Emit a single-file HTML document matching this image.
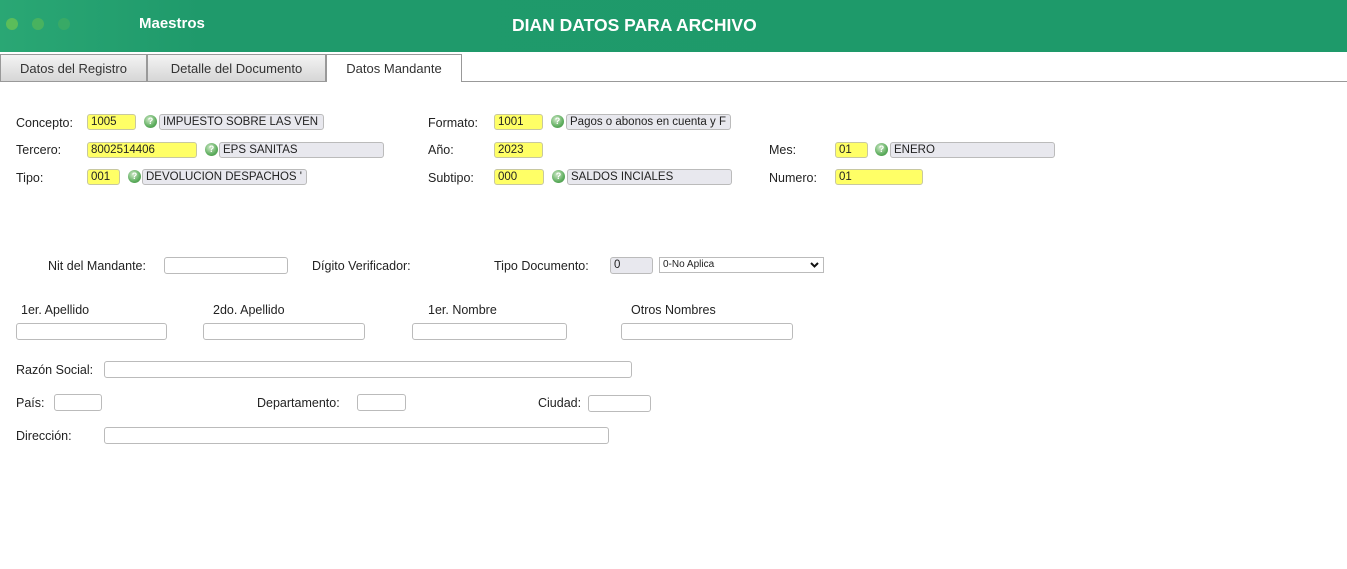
<!DOCTYPE html>
<html><head><meta charset="utf-8"><style>
*{box-sizing:border-box;margin:0;padding:0}
body{width:1347px;height:569px;background:#fff;position:relative;overflow:hidden;font-family:"Liberation Sans",sans-serif;font-size:12px;color:#222}
.a{position:absolute}
.hdr{left:0;top:0;width:1347px;height:52px;background:linear-gradient(90deg,#2aa774 0,#1f9a6b 200px,#1e9a6a)}
.dot{width:12px;height:12px;border-radius:50%;top:18px}
.tab{top:54px;height:28px;border:1px solid #999;background:linear-gradient(#f4f4f4,#d6d6d6);font-size:13px;color:#333;text-align:center;line-height:27px}
.lb{font-size:12.5px;color:#222;line-height:16px}
.y{background:#ffff66;border:1px solid #c8c8a0;border-radius:3px;height:16px;font-size:11.5px;line-height:14px;padding-left:3px}
.d{background:#e8e8ee;border:1px solid #bbb;border-radius:3px;height:16px;font-size:11.5px;line-height:14px;padding-left:3px;white-space:nowrap;overflow:hidden}
.w{background:#fff;border:1px solid #bbb;border-radius:3px;height:17px}
.ic{width:13px;height:13px;border-radius:50%;background:radial-gradient(circle at 40% 35%,#cfe9c8,#5fae5f 60%,#3d8a3d);color:#fff;font-size:9px;font-weight:bold;text-align:center;line-height:13px}
</style></head><body>
<div class="a hdr"></div>
<div class="a dot" style="left:6px;background:#5bbd5a"></div>
<div class="a dot" style="left:32px;background:#48b25f"></div>
<div class="a dot" style="left:58px;background:#38aa66"></div>
<div class="a" style="left:139px;top:15px;color:#fff;font-weight:bold;font-size:15px">Maestros</div>
<div class="a" style="left:512px;top:15px;color:#fff;font-weight:bold;font-size:17.5px">DIAN DATOS PARA ARCHIVO</div>
<div class="a tab" style="left:0;width:147px">Datos del Registro</div>
<div class="a tab" style="left:147px;width:179px">Detalle del Documento</div>
<div class="a tab" style="left:326px;width:136px;background:#fff;border-bottom:none;height:28px">Datos Mandante</div>
<div class="a" style="left:0;top:81px;width:326px;height:1px;background:#999"></div>
<div class="a" style="left:461px;top:81px;width:886px;height:1px;background:#999"></div>

<div class="a lb" style="left:16px;top:115px">Concepto:</div>
<div class="a y" style="left:87px;top:114px;width:49px">1005</div>
<div class="a ic" style="left:144px;top:115px">?</div>
<div class="a d" style="left:159px;top:114px;width:165px">IMPUESTO SOBRE LAS VEN</div>
<div class="a lb" style="left:16px;top:142px">Tercero:</div>
<div class="a y" style="left:87px;top:142px;width:110px">8002514406</div>
<div class="a ic" style="left:205px;top:143px">?</div>
<div class="a d" style="left:219px;top:142px;width:165px">EPS SANITAS</div>
<div class="a lb" style="left:16px;top:170px">Tipo:</div>
<div class="a y" style="left:87px;top:169px;width:33px">001</div>
<div class="a ic" style="left:128px;top:170px">?</div>
<div class="a d" style="left:142px;top:169px;width:165px">DEVOLUCION DESPACHOS '</div>

<div class="a lb" style="left:428px;top:115px">Formato:</div>
<div class="a y" style="left:494px;top:114px;width:49px">1001</div>
<div class="a ic" style="left:551px;top:115px">?</div>
<div class="a d" style="left:566px;top:114px;width:165px">Pagos o abonos en cuenta y F</div>
<div class="a lb" style="left:428px;top:142px">Año:</div>
<div class="a y" style="left:494px;top:142px;width:49px">2023</div>
<div class="a lb" style="left:428px;top:170px">Subtipo:</div>
<div class="a y" style="left:494px;top:169px;width:50px">000</div>
<div class="a ic" style="left:552px;top:170px">?</div>
<div class="a d" style="left:567px;top:169px;width:165px">SALDOS INCIALES</div>

<div class="a lb" style="left:769px;top:142px">Mes:</div>
<div class="a y" style="left:835px;top:142px;width:33px">01</div>
<div class="a ic" style="left:875px;top:143px">?</div>
<div class="a d" style="left:890px;top:142px;width:165px">ENERO</div>
<div class="a lb" style="left:769px;top:170px">Numero:</div>
<div class="a y" style="left:835px;top:169px;width:88px">01</div>

<div class="a lb" style="left:48px;top:258px">Nit del Mandante:</div>
<div class="a w" style="left:164px;top:257px;width:124px"></div>
<div class="a lb" style="left:312px;top:258px">Dígito Verificador:</div>
<div class="a lb" style="left:494px;top:258px">Tipo Documento:</div>
<div class="a d" style="left:610px;top:257px;width:43px;height:17px">0</div>
<div class="a" style="left:659px;top:257px;width:165px;height:16px;border:1px solid #bbb;font-size:10px;line-height:14px;padding-left:3px">0-No Aplica<svg style="position:absolute;right:4px;top:4px" width="9" height="6" viewBox="0 0 9 6"><path d="M1 1l3.5 3.5L8 1" stroke="#111" stroke-width="2" fill="none"/></svg></div>

<div class="a lb" style="left:21px;top:302px">1er. Apellido</div>
<div class="a lb" style="left:213px;top:302px">2do. Apellido</div>
<div class="a lb" style="left:428px;top:302px">1er. Nombre</div>
<div class="a lb" style="left:631px;top:302px">Otros Nombres</div>
<div class="a w" style="left:16px;top:323px;width:151px"></div>
<div class="a w" style="left:203px;top:323px;width:162px"></div>
<div class="a w" style="left:412px;top:323px;width:155px"></div>
<div class="a w" style="left:621px;top:323px;width:172px"></div>

<div class="a lb" style="left:16px;top:362px">Razón Social:</div>
<div class="a w" style="left:104px;top:361px;width:528px"></div>
<div class="a lb" style="left:16px;top:395px">País:</div>
<div class="a w" style="left:54px;top:394px;width:48px"></div>
<div class="a lb" style="left:257px;top:395px">Departamento:</div>
<div class="a w" style="left:357px;top:394px;width:49px"></div>
<div class="a lb" style="left:538px;top:395px">Ciudad:</div>
<div class="a w" style="left:588px;top:395px;width:63px"></div>
<div class="a lb" style="left:16px;top:428px">Dirección:</div>
<div class="a w" style="left:104px;top:427px;width:505px"></div>
</body></html>
